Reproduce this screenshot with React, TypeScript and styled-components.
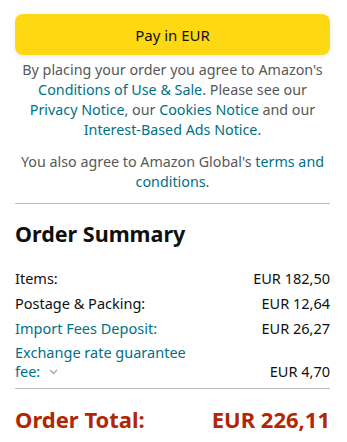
import React from "react";
import styled, { createGlobalStyle } from "styled-components";

const Global = createGlobalStyle`
  html, body { margin: 0; padding: 0; background: #fff; }
  body { font-family: "Noto Sans", "Open Sans", Arial, sans-serif; color: #0F1111; }
`;

const Page = styled.div`
  width: 315px;
  padding: 14px 17px 0 15px;
  display: flex;
  flex-direction: column;
`;

const PayButton = styled.button`
  height: 41px;
  width: 100%;
  border: 0;
  border-radius: 8px;
  background: #ffd814;
  box-shadow: 0 2px 5px 0 rgba(213, 217, 217, 0.5);
  font-family: inherit;
  font-size: 15px;
  color: #0f1111;
  padding: 0;
`;

const Legal = styled.p<{ $gap: number }>`
  margin: ${(p) => p.$gap}px 0 0;
  padding: 0 3px;
  font-size: 14.3px;
  line-height: 20px;
  color: #565959;
  text-align: center;
`;

const Link = styled.span`
  color: #007185;
`;

const Divider = styled.hr<{ $top: number }>`
  margin: ${(p) => p.$top}px 0 0;
  border: 0;
  border-top: 1px solid #bbbfbf;
  height: 0;
`;

const Heading = styled.h2`
  margin: 16px 0 0;
  font-size: 21.5px;
  line-height: 28px;
  font-weight: 700;
  color: #0f1111;
`;

const Rows = styled.div`
  margin-top: 20px;
  display: flex;
  flex-direction: column;
  gap: 5px;
`;

const Row = styled.div`
  display: flex;
  justify-content: space-between;
  align-items: flex-end;
  font-size: 14.5px;
  line-height: 20px;
`;

const Label = styled.span<{ $link?: boolean }>`
  color: ${(p) => (p.$link ? "#007185" : "#0f1111")};
  max-width: 180px;
  line-height: 19px;
`;

const Chevron = styled.svg`
  margin-left: 9px;
  vertical-align: 2px;
`;

const TotalRow = styled.div`
  margin-top: 16px;
  display: flex;
  justify-content: space-between;
  font-size: 22px;
  line-height: 28px;
  font-weight: 700;
  color: #b12704;
`;

export default function App() {
  return (
    <>
      <Global />
      <Page>
        <PayButton>Pay in EUR</PayButton>
        <Legal $gap={5}>
          By placing your order you agree to Amazon's{" "}
          <Link>Conditions of Use &amp; Sale</Link>. Please see our{" "}
          <Link>Privacy Notice</Link>, our <Link>Cookies Notice</Link> and our{" "}
          <Link>Interest-Based Ads Notice</Link>.
        </Legal>
        <Legal $gap={12}>
          You also agree to Amazon Global's <Link>terms and conditions</Link>.
        </Legal>
        <Divider $top={11} />
        <Heading>Order Summary</Heading>
        <Rows>
          <Row>
            <Label>Items:</Label>
            <span>EUR 182,50</span>
          </Row>
          <Row>
            <Label>Postage &amp; Packing:</Label>
            <span>EUR 12,64</span>
          </Row>
          <Row>
            <Label $link>Import Fees Deposit:</Label>
            <span>EUR 26,27</span>
          </Row>
          <Row>
            <Label $link>
              Exchange rate guarantee fee:
              <Chevron width="9" height="6" viewBox="0 0 9 6">
                <path d="M1 1l3.5 3.5L8 1" fill="none" stroke="#a2a6ac" strokeWidth="1.3" />
              </Chevron>
            </Label>
            <span>EUR 4,70</span>
          </Row>
        </Rows>
        <Divider $top={7} />
        <TotalRow>
          <span>Order Total:</span>
          <span>EUR 226,11</span>
        </TotalRow>
      </Page>
    </>
  );
}
